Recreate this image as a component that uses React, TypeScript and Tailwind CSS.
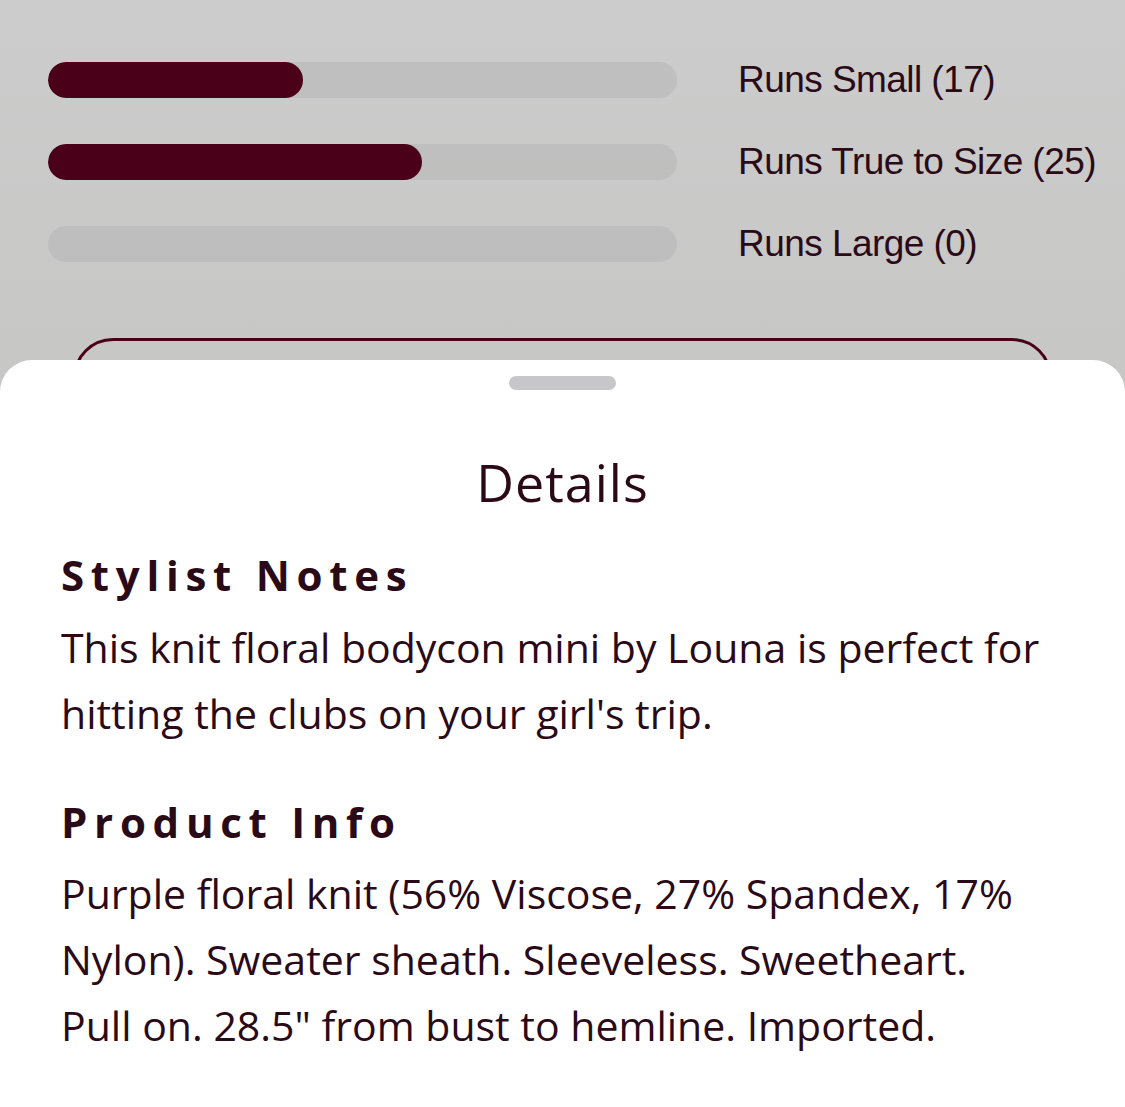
import React from 'react';

const fits = [
  { label: 'Runs Small (17)', pct: 40.5 },
  { label: 'Runs True to Size (25)', pct: 59.5 },
  { label: 'Runs Large (0)', pct: 0 },
];

export default function App() {
  return (
    <div className="relative w-[1125px] h-[1107px] overflow-hidden bg-gradient-to-b from-[#cccccc] to-[#bcbdba] text-[#2a0a16]" style={{ fontFamily: '"Liberation Sans", Arial, sans-serif' }}>
      {/* Fit bars */}
      <div className="flex flex-col gap-[46px] pt-[62px] pl-[48px]">
        {fits.map(f => (
          <div key={f.label} className="flex items-center h-[36px]">
            <div className="w-[629px] h-[36px] rounded-full bg-[#bbbbbb]/80 overflow-hidden">
              {f.pct > 0 && (
                <div className="h-full rounded-full bg-[#4a0019]" style={{ width: `${f.pct}%` }}></div>
              )}
            </div>
            <span className="ml-[61px] text-[37px] tracking-[-0.015em] whitespace-nowrap">{f.label}</span>
          </div>
        ))}
      </div>

      {/* Button peeking behind sheet */}
      <div className="mx-[73px] mt-[76px] h-[80px] rounded-[42px] border-[3px] border-[#4a0019]"></div>

      {/* Bottom sheet */}
      <div className="absolute left-0 right-0 top-[360px] bottom-0 bg-white rounded-t-[32px]" style={{ fontFamily: '"Open Sans", sans-serif' }}>
        <div className="flex justify-center pt-[16px]">
          <div className="w-[107px] h-[14px] rounded-full bg-[#c7c7cb]"></div>
        </div>
        <h2 className="mt-[66px] text-center text-[52px] tracking-[0.02em] leading-none">Details</h2>
        <div className="pl-[61px] w-[1043px]">
          <h3 className="mt-[46px] text-[42px] font-bold tracking-[0.16em] leading-none">Stylist Notes</h3>
          <p className="mt-[18px] text-[41px] leading-[66px]">
            This knit floral bodycon mini by Louna is perfect for hitting the clubs on your girl's trip.
          </p>
          <h3 className="mt-[55px] text-[42px] font-bold tracking-[0.16em] leading-none">Product Info</h3>
          <p className="mt-[17px] text-[41px] leading-[66px]">
            Purple floral knit (56% Viscose, 27% Spandex, 17% Nylon). Sweater sheath. Sleeveless. Sweetheart. Pull on. 28.5" from bust to hemline. Imported.
          </p>
        </div>
      </div>
    </div>
  );
}
